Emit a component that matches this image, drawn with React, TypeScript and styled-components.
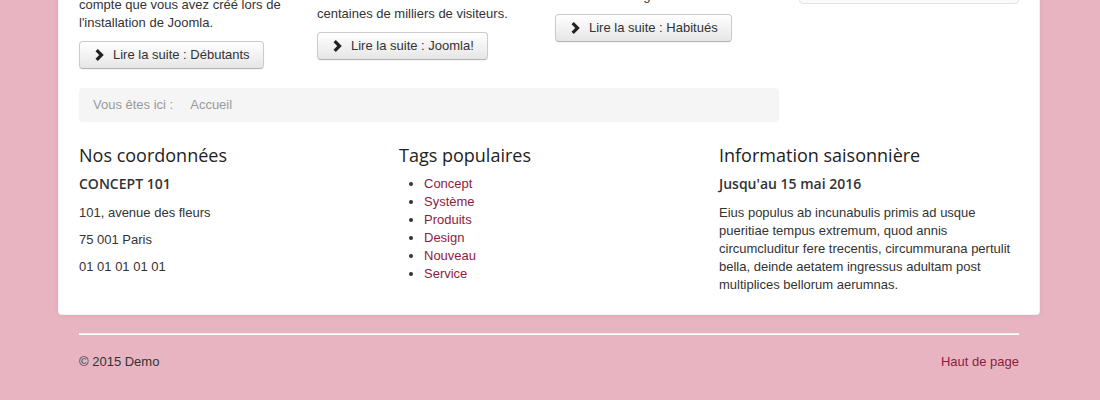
import React from 'react';
import styled, { createGlobalStyle } from 'styled-components';

const GlobalStyle = createGlobalStyle`
    html, body {
        margin: 0;
        padding: 0;
        background: #e9b4c1;
        overflow: hidden;
    }
    body {
        font-family: "Liberation Sans", Arial, sans-serif;
        font-size: 13px;
        line-height: 18px;
        color: #333;
    }
`;

const Page = styled.div`
    height: 400px;
    overflow: hidden;
`;

const Container = styled.div`
    width: 940px;
    margin: -70px auto 0;
    padding: 20px;
    background: #fff;
    border: 1px solid rgba(0, 0, 0, 0.05);
    border-radius: 4px;
    box-shadow: 0 0 6px rgba(0, 0, 0, 0.075);
    transform: translateX(-1px);
`;

const TopRow = styled.div`
    display: grid;
    grid-template-columns: 700px 220px;
    gap: 20px;
    margin-bottom: 18px;
`;

const Items = styled.div`
    display: grid;
    grid-template-columns: repeat(3, 1fr);
    column-gap: 14px;
    margin-bottom: 10px;
`;

const Item = styled.div`
    p {
        margin: 0 0 9px;
        white-space: nowrap;
    }
`;

const Button = styled.button`
    display: inline-flex;
    align-items: center;
    gap: 9px;
    height: 28px;
    padding: 4px 13px 4px 15px;
    font: inherit;
    color: #333;
    background: linear-gradient(to bottom, #fff, #e6e6e6);
    border: 1px solid #ccc;
    border-bottom-color: #b3b3b3;
    border-radius: 4px;
    box-shadow: inset 0 1px 0 rgba(255, 255, 255, 0.2), 0 1px 2px rgba(0, 0, 0, 0.05);
    cursor: pointer;
`;

const Breadcrumb = styled.div`
    display: flex;
    gap: 17px;
    padding: 8px 14px;
    background: #f5f5f5;
    border-radius: 4px;
    color: #999;
`;

const Well = styled.div`
    height: 51px;
    background: #fafafa;
    border: 1px solid #e3e3e3;
    border-radius: 4px;
`;

const Modules = styled.div`
    display: grid;
    grid-template-columns: repeat(3, 1fr);
    gap: 20px;
`;

const Module = styled.div`
    p {
        margin: 0 0 9px;
    }
    p:last-child {
        margin-bottom: 0;
    }
`;

const ModuleTitle = styled.h3`
    margin: 4px 0 9px;
    font-family: "Open Sans", sans-serif;
    font-size: 18px;
    font-weight: 400;
    line-height: 22px;
    color: #222;
`;

const SubTitle = styled.div`
    margin: 0 0 11px;
    font-family: "Open Sans", sans-serif;
    font-size: 14px;
    font-weight: 600;
    line-height: 18px;
    color: #333;
`;

const TagList = styled.ul`
    margin: 1px 0 0;
    padding-left: 25px;
`;

const Link = styled.a`
    color: #8c1c40;
    text-decoration: none;
`;

const Footer = styled.footer`
    width: 940px;
    margin: 0 auto;
    padding-top: 18px;
    transform: translateX(-1px);
`;

const Rule = styled.hr`
    margin: 0 0 18px;
    border: 0;
    border-top: 1px solid #eee;
    border-bottom: 1px solid #fff;
`;

const FooterRow = styled.div`
    display: flex;
    justify-content: space-between;
`;

const Chevron = () => (
    <svg width="9" height="12" viewBox="0 0 9 12">
        <polygon points="0.5,2.3 2.8,0 8.8,6 2.8,12 0.5,9.7 4.2,6" fill="#222" />
    </svg>
);

const items = [
    {
        paras: [['Connectez-vous au site.'], ['Pour commencer, utilisez le', 'compte que vous avez créé lors de', "l'installation de Joomla."]],
        label: 'Débutants',
    },
    {
        paras: [
            [
                'Joomla! fait tourner des sites web',
                'de toute taille, du blog au portail,',
                'utilisé sur des sites web avec des',
                'centaines de milliers de visiteurs.',
            ],
        ],
        label: 'Joomla!',
    },
    {
        paras: [['Vous connaissez déjà Joomla ?', 'Cette section est pour vous :', 'tout sur les usages avancés.']],
        label: 'Habitués',
    },
];

const tags = ['Concept', 'Système', 'Produits', 'Design', 'Nouveau', 'Service'];

export default function App() {
    return (
        <Page>
            <GlobalStyle />
            <Container>
                <TopRow>
                    <div>
                        <Items>
                            {items.map((item) => (
                                <Item key={item.label}>
                                    {item.paras.map((lines, i) => (
                                        <p key={i}>
                                            {lines.map((line, j) => (
                                                <React.Fragment key={j}>
                                                    {j > 0 && <br />}
                                                    {line}
                                                </React.Fragment>
                                            ))}
                                        </p>
                                    ))}
                                    <p>
                                        <Button>
                                            <Chevron />
                                            Lire la suite : {item.label}
                                        </Button>
                                    </p>
                                </Item>
                            ))}
                        </Items>
                        <Breadcrumb>
                            <span>Vous êtes ici :</span>
                            <span>Accueil</span>
                        </Breadcrumb>
                    </div>
                    <div>
                        <Well />
                    </div>
                </TopRow>
                <Modules>
                    <Module>
                        <ModuleTitle>Nos coordonnées</ModuleTitle>
                        <SubTitle>CONCEPT 101</SubTitle>
                        <p>101, avenue des fleurs</p>
                        <p>75 001 Paris</p>
                        <p>01 01 01 01 01</p>
                    </Module>
                    <Module>
                        <ModuleTitle>Tags populaires</ModuleTitle>
                        <TagList>
                            {tags.map((tag) => (
                                <li key={tag}>
                                    <Link href="#">{tag}</Link>
                                </li>
                            ))}
                        </TagList>
                    </Module>
                    <Module>
                        <ModuleTitle>Information saisonnière</ModuleTitle>
                        <SubTitle>Jusqu'au 15 mai 2016</SubTitle>
                        <p>
                            Eius populus ab incunabulis primis ad usque pueritiae tempus extremum, quod annis
                            circumcluditur fere trecentis, circummurana pertulit bella, deinde aetatem ingressus
                            adultam post multiplices bellorum aerumnas.
                        </p>
                    </Module>
                </Modules>
            </Container>
            <Footer>
                <Rule />
                <FooterRow>
                    <span>© 2015 Demo</span>
                    <Link href="#">Haut de page</Link>
                </FooterRow>
            </Footer>
        </Page>
    );
}
